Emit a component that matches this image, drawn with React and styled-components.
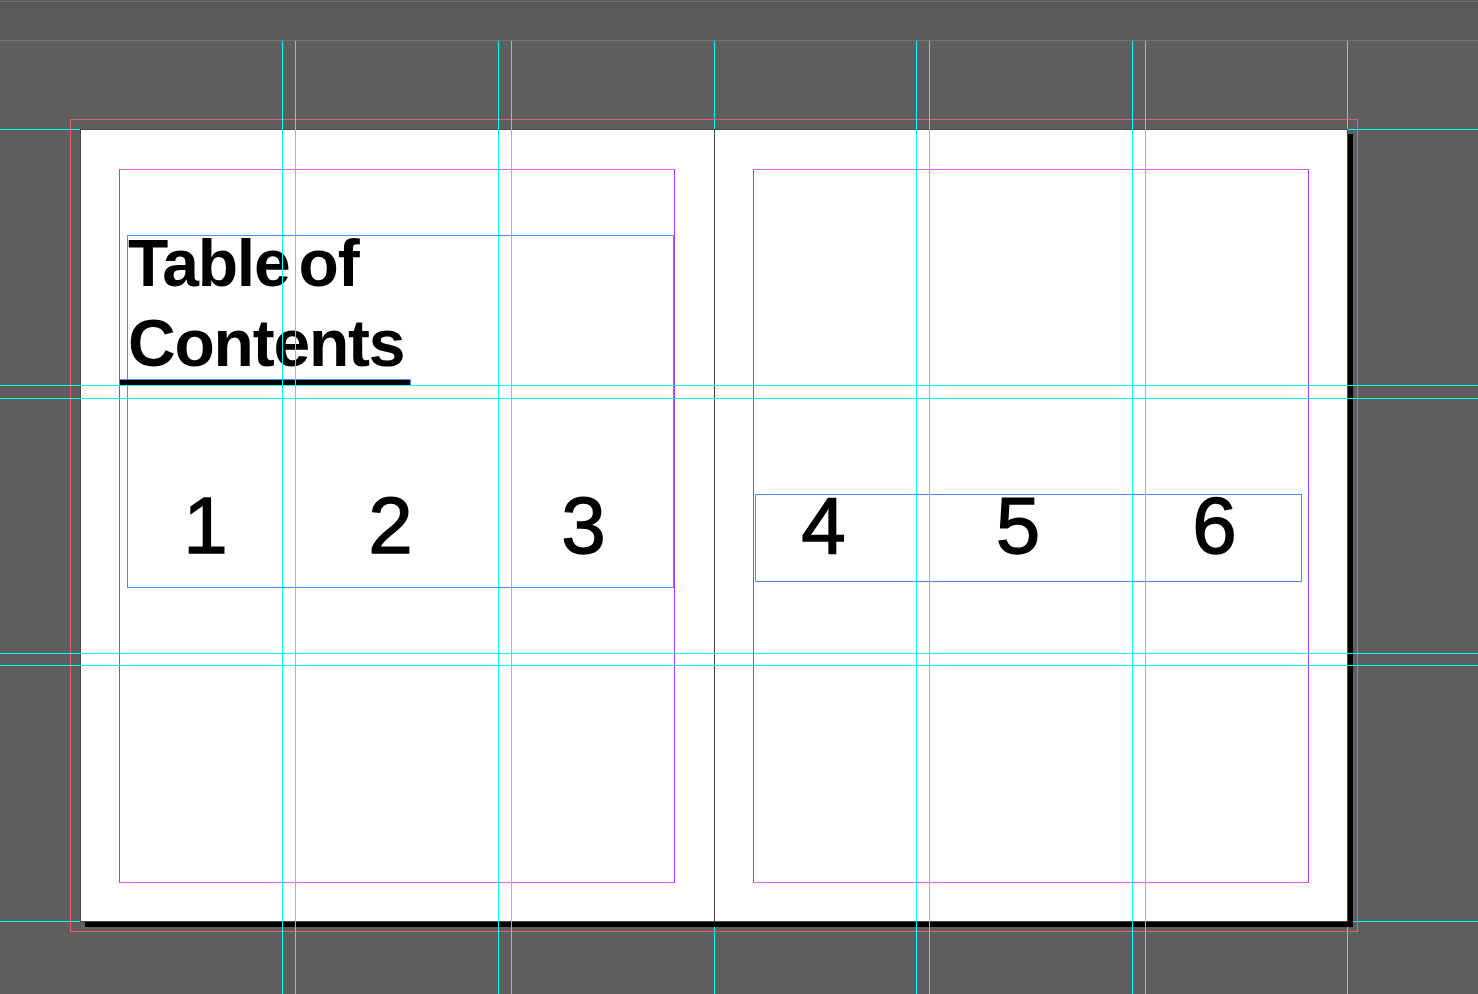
import React from "react";
import styled, { createGlobalStyle } from "styled-components";

const Global = createGlobalStyle`
  html, body { margin: 0; padding: 0; background: #5e5e5e; overflow: hidden; }
  body { font-family: "Liberation Sans", Arial, sans-serif; }
  * { box-sizing: border-box; }
`;

const TopBar = styled.div`
  height: 41px;
  background: #595959;
  border-bottom: 1px solid #747474;
  box-shadow: inset 0 1px 0 #595959, inset 0 2px 0 #6e6e6e;
`;

const Canvas = styled.div`
  position: relative;
  height: 953px;
  overflow: hidden;
  padding: 88px 0 0 80px;
`;

const VGuide = styled.div`
  position: absolute;
  top: 0;
  bottom: 0;
  left: ${(p) => p.$x}px;
  width: 1px;
  background: #00ffff;
  z-index: ${(p) => (p.$behind ? 0 : 3)};
  pointer-events: none;
`;

const HGuide = styled.div`
  position: absolute;
  left: 0;
  right: 0;
  top: ${(p) => p.$y}px;
  height: 1px;
  background: #00ffff;
  z-index: ${(p) => (p.$behind ? 0 : 3)};
  pointer-events: none;
`;

const Spread = styled.div`
  position: relative;
  z-index: 1;
  box-sizing: content-box;
  width: 1266px;
  height: 791px;
  display: grid;
  grid-template-columns: 633px 1px 632px;
  background: #ffffff;
  border: 1px solid #474747;
  box-shadow: 5px 5px 0 #000000;
`;

const Bleed = styled.div`
  position: absolute;
  inset: -11px;
  border: 1px solid #e5606c;
  pointer-events: none;
`;

const Spine = styled.div`
  background: #444444;
`;

const Page = styled.div`
  padding: 39px 0 0 38px;
`;

const MarginBox = styled.div`
  position: relative;
  width: 556px;
  height: 714px;
  border-top: 1px solid #e65ce8;
  border-bottom: 1px solid #e65ce8;
  border-left: 1px solid #9f3cf8;
  border-right: 1px solid #9f3cf8;
`;

const TextFrame = styled.div`
  margin-left: ${(p) => p.$left}px;
  margin-top: ${(p) => p.$top}px;
  width: 547px;
  height: ${(p) => p.$height}px;
  border: 1px solid #4f8ff0;
  overflow: visible;
`;

const Title = styled.h1`
  margin: -13px 0 0 0;
  font-family: "Liberation Sans", Arial, sans-serif;
  font-weight: 700;
  font-size: 66px;
  line-height: 80px;
  letter-spacing: -1.2px;
  word-spacing: -8px;
  color: #000;
`;

const RuleBar = styled.div`
  position: absolute;
  left: 0;
  top: 209px;
  width: 291px;
  height: 6px;
  background: #000;
  border-top: 1px solid #4f8ff0;
  border-right: 1px solid #4f8ff0;
`;

const NumberRow = styled.div`
  display: flex;
  margin-top: ${(p) => p.$top}px;
  height: 80px;
`;

const Digit = styled.span`
  display: block;
  flex: none;
  width: 60px;
  margin-left: ${(p) => p.$gap}px;
  text-align: center;
  font-family: "Liberation Sans", Arial, sans-serif;
  font-size: 80px;
  line-height: 80px;
  color: #000;
  -webkit-text-stroke: 1.3px #000;
`;

const frontV = [282, 295, 498, 511, 916, 929, 1132, 1145];
const behindV = [714, 1347];
const frontH = [344, 357, 612, 624];
const behindH = [88, 880];

export default function App() {
  return (
    <>
      <Global />
      <TopBar />
      <Canvas>
        {behindV.map((x) => (
          <VGuide key={"bv" + x} $x={x} $behind />
        ))}
        {behindH.map((y) => (
          <HGuide key={"bh" + y} $y={y} $behind />
        ))}
        <Spread>
          <Bleed />
          <Page>
            <MarginBox>
              <TextFrame $left={7} $top={65} $height={353}>
                <Title>
                  Table of
                  <br />
                  Contents
                </Title>
                <NumberRow $top={103}>
                  <Digit $gap={47.5}>1</Digit>
                  <Digit $gap={125}>2</Digit>
                  <Digit $gap={133}>3</Digit>
                </NumberRow>
              </TextFrame>
              <RuleBar />
            </MarginBox>
          </Page>
          <Spine />
          <Page>
            <MarginBox>
              <TextFrame $left={1} $top={324} $height={88}>
                <NumberRow $top={-9}>
                  <Digit $gap={37.5}>4</Digit>
                  <Digit $gap={134.5}>5</Digit>
                  <Digit $gap={136.5}>6</Digit>
                </NumberRow>
              </TextFrame>
            </MarginBox>
          </Page>
        </Spread>
        {frontV.map((x) => (
          <VGuide key={"fv" + x} $x={x} />
        ))}
        {frontH.map((y) => (
          <HGuide key={"fh" + y} $y={y} />
        ))}
      </Canvas>
    </>
  );
}
